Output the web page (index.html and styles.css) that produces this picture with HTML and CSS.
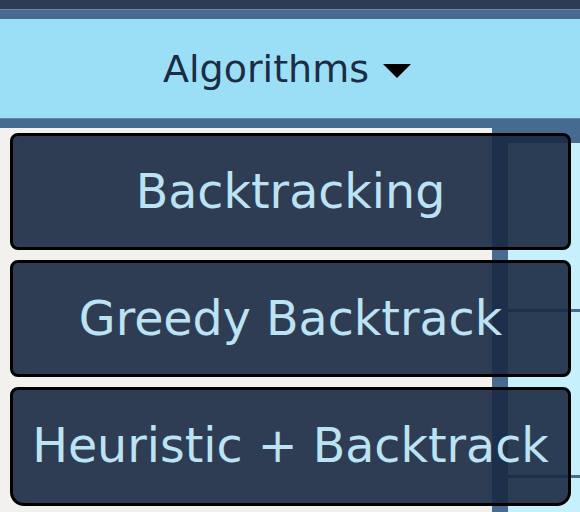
FILE: index.html
```html
<!DOCTYPE html>
<html>
<head>
<meta charset="utf-8">
<link rel="stylesheet" href="styles.css">
</head>
<body>
<div class="page">
  <div class="topbar"></div>
  <div class="strip"></div>
  <nav class="nav">
    <button class="toggle">Algorithms <span class="caret"></span></button>
  </nav>
  <div class="strip"></div>
  <main class="content">
    <section class="left"></section>
    <div class="band"></div>
    <section class="right">
      <div class="right-head"></div>
      <div class="row row-a"></div>
      <div class="row row-b"></div>
      <div class="row row-c"></div>
    </section>
  </main>
  <ul class="menu">
    <li class="item">Backtracking</li>
    <li class="item">Greedy Backtrack</li>
    <li class="item">Heuristic + Backtrack</li>
  </ul>
</div>
</body>
</html>
```
FILE: styles.css
```css
* { box-sizing: border-box; }
html, body { margin: 0; padding: 0; }
body {
  font-family: "DejaVu Sans", Verdana, sans-serif;
  width: 580px;
  height: 512px;
  overflow: hidden;
  background: #f2f1ed;
}
.page {
  position: relative;
  height: 512px;
  display: flex;
  flex-direction: column;
}
.topbar {
  height: 9px;
  background: #2e3c53;
}
.strip {
  height: 10px;
  background: #476a91;
  border-top: 1px solid #6386ab;
}
.nav {
  height: 99px;
  background: #9bdff7;
  display: flex;
  align-items: center;
  justify-content: center;
}
.toggle {
  font-family: inherit;
  font-size: 38px;
  color: #1c2c44;
  background: none;
  border: 0;
  padding: 0 6px 0 0;
  display: flex;
  align-items: center;
  gap: 14px;
}
.caret {
  width: 0;
  height: 0;
  border-left: 14px solid transparent;
  border-right: 14px solid transparent;
  border-top: 14px solid #000;
  margin-top: 4px;
}
.content {
  flex: 1;
  display: grid;
  grid-template-columns: 492px 16px 1fr;
}
.left { background: #f2f1ed; }
.band { background: #476a91; }
.right {
  background: #c6f0fc;
  display: flex;
  flex-direction: column;
}
.right-head {
  height: 15px;
  background: #476a91;
}
.row { border-bottom: 3px solid #476a91; }
.row-a { height: 169px; }
.row-b { height: 166px; }
.row-c { flex: 1; border-bottom: 0; }
.menu {
  position: absolute;
  top: 133px;
  left: 10px;
  width: 561px;
  margin: 0;
  padding: 0;
  list-style: none;
  display: flex;
  flex-direction: column;
  gap: 10px;
}
.item {
  background: rgba(24, 41, 66, 0.9);
  border: 3px solid #000;
  border-radius: 8px;
  color: #bbe3f3;
  font-size: 47.5px;
  line-height: 53px;
  padding: 29px 0;
  text-align: center;
  white-space: nowrap;
}
.item:last-child {
  border-radius: 8px 8px 14px 14px;
  padding-bottom: 31px;
}
```
